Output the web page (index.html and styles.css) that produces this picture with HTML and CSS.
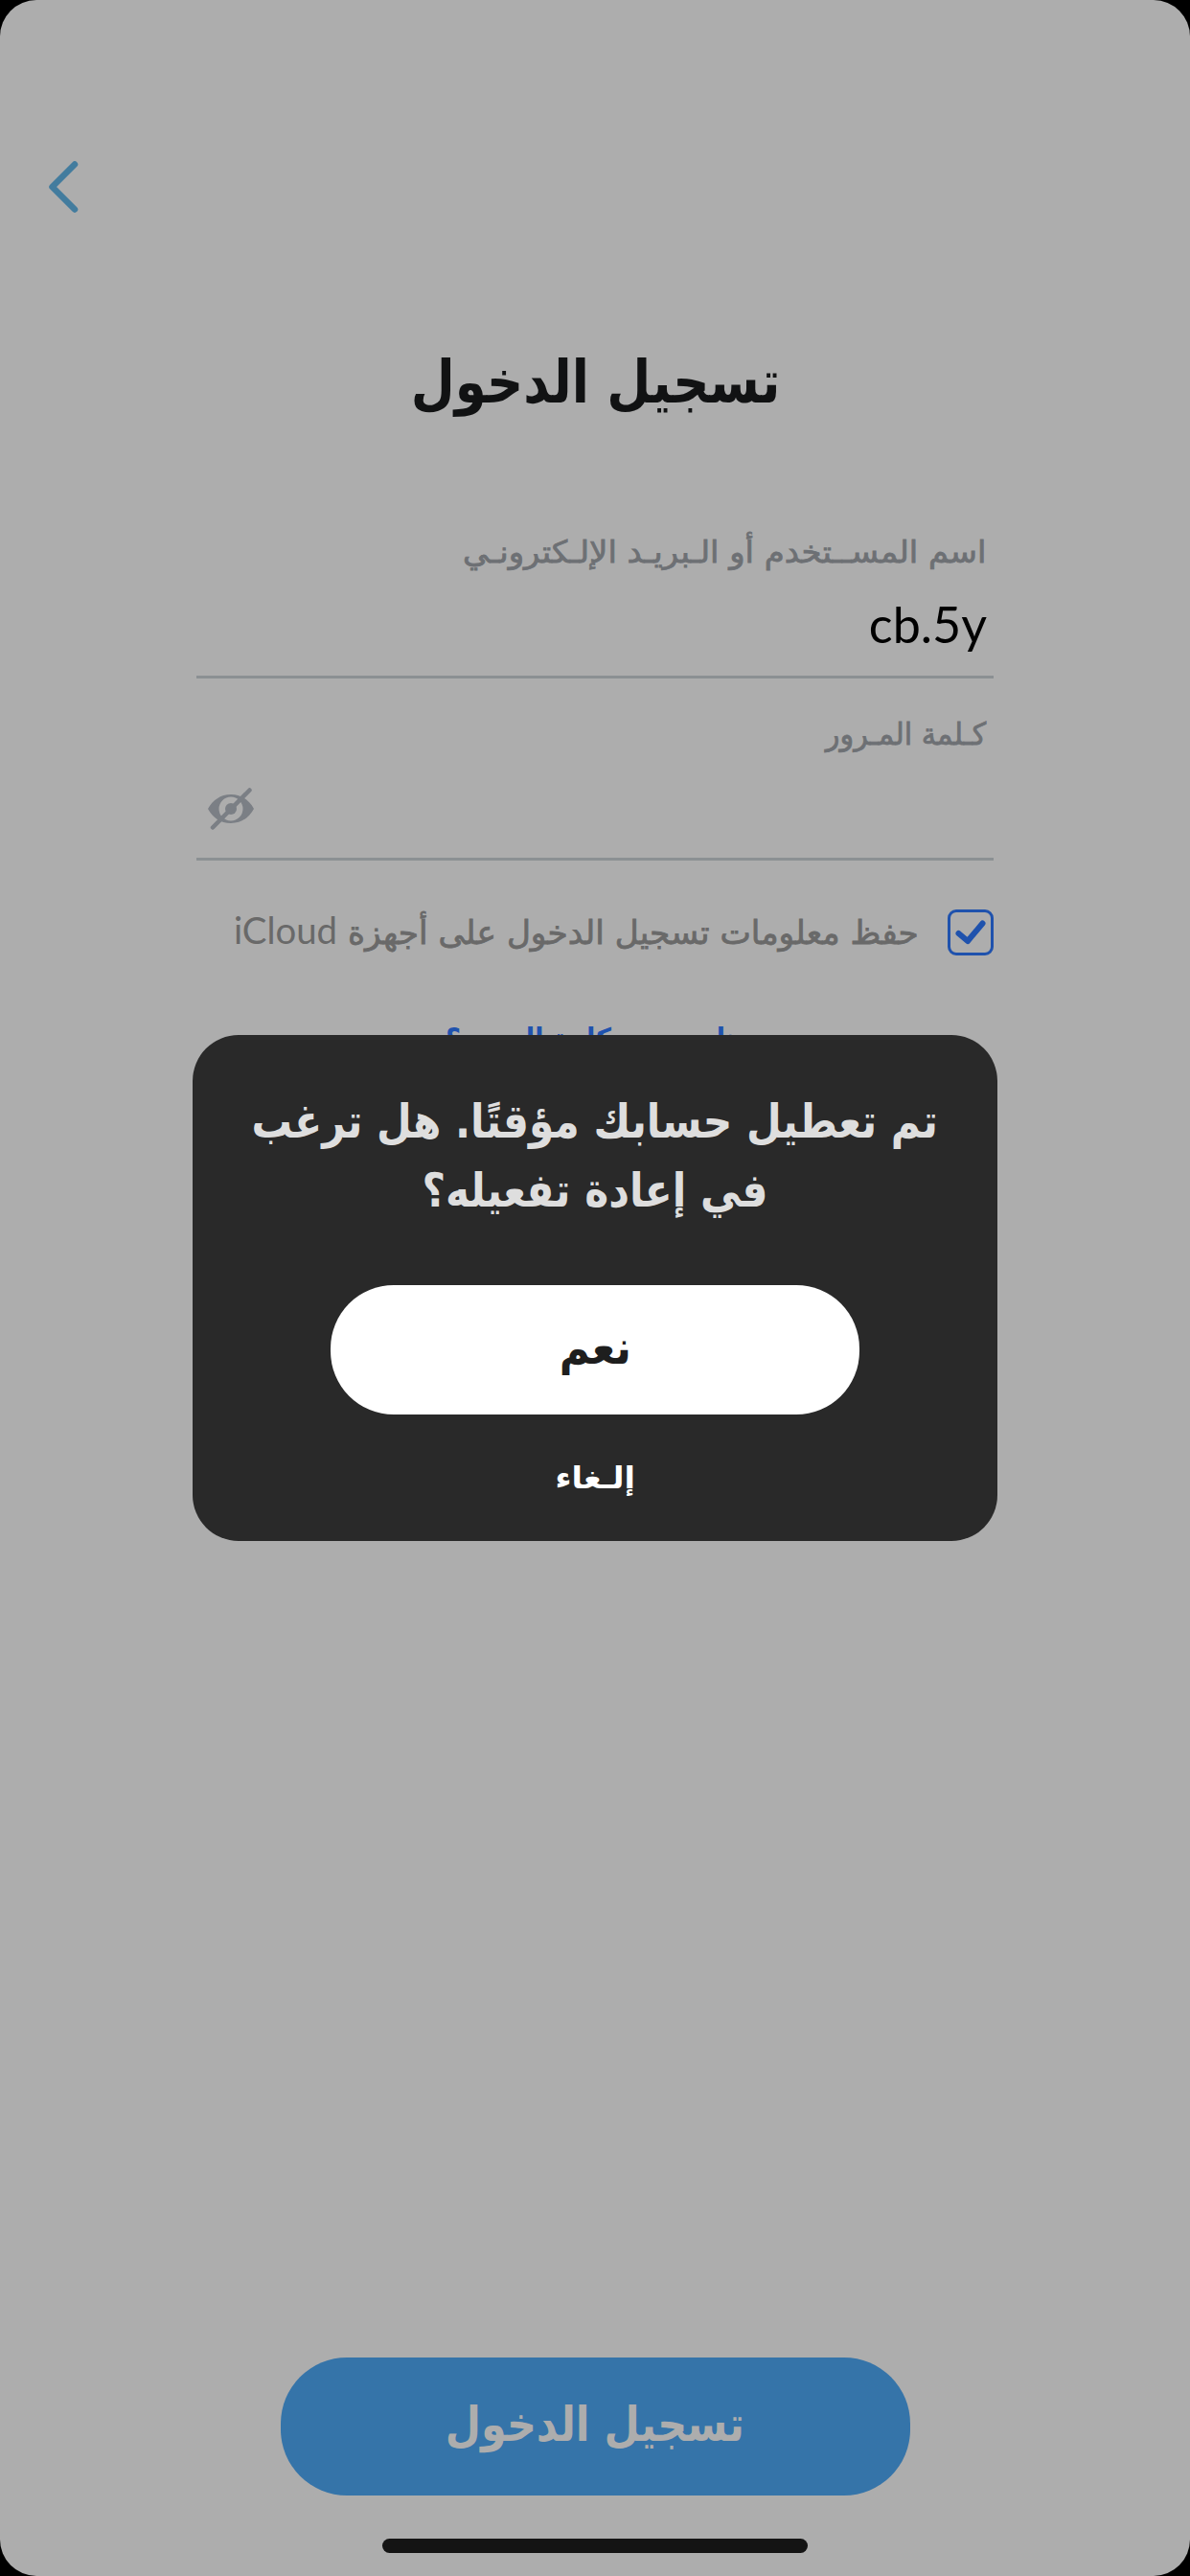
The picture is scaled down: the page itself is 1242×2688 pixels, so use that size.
FILE: index.html
```html
<!DOCTYPE html>
<html lang="ar" dir="rtl">
<head>
  <meta charset="UTF-8">
  <meta name="viewport" content="width=device-width, initial-scale=1.0">
  <title>تسجيل الدخول</title>
  <link rel="stylesheet" href="styles.css">
</head>
<body>
  <div class="screen">
    <!-- back -->
    <header class="nav">
      <svg class="back" viewBox="0 0 40 60" fill="none">
        <path d="M33 6.5 9.500 30l23.500 23.500"/>
      </svg>
    </header>

    <h1 class="title"><span>تسجيل الدخول</span></h1>

    <!-- login form -->
    <main class="form">
      <div class="field">
        <label class="label label-user"><span>اسم المســتخدم أو الـبريـد الإلـكترونـي</span></label>
        <div class="value">cb.5y</div>
      </div>
      <div class="field">
        <label class="label label-pass"><span>كـلمة المـرور</span></label>
        <div class="value">
          <svg class="eye" viewBox="0 0 48 44">
            <path fill-rule="evenodd" d="M0 22C5 13 13 7 24 7s19 6 24 15c-5 9-13 15-24 15S5 31 0 22zM24 9.500a12.500 12.500 0 1 0 0 25 12.500 12.500 0 0 0 0-25z"/>
            <circle cx="24" cy="22" r="6"/>
            <path class="slash" d="M5 41.500 43.500 2.500"/>
          </svg>
        </div>
      </div>
      <div class="remember">
        <svg class="checkbox" viewBox="0 0 48 48" fill="none">
          <rect x="1.5" y="1.500" width="45" height="45" rx="7.500"/>
          <path d="m11.500 25 9.500 8 15.500-18.500"/>
        </svg>
        <p class="remember-text"><span>حفظ معلومات تسجيل الدخول على أجهزة <bdi class="latin">iCloud</bdi></span></p>
      </div>
      <p class="forgot"><span>هل نسيت كلمة المرور؟</span></p>
    </main>

    <footer class="footer">
      <div class="login-btn"><span>تسجيل الدخول</span></div>
      <div class="home-bar"></div>
    </footer>

    <!-- reactivate account dialog -->
    <div class="dialog">
      <p class="message"><span>تم تعطيل حسابك مؤقتًا. هل ترغب</span><span>في إعادة تفعيله؟</span></p>
      <div class="yes-btn"><span>نعم</span></div>
      <div class="cancel"><span>إلـغاء</span></div>
    </div>
  </div>
</body>
</html>
```
FILE: styles.css
```css
html, body {
  margin: 0;
  padding: 0;
  background: #000;
}
* {
  box-sizing: border-box;
}
h1, p {
  margin: 0;
}
span {
  display: inline-block;
  white-space: nowrap;
}
.screen {
  position: relative;
  display: flex;
  flex-direction: column;
  width: 1242px;
  height: 2688px;
  border-radius: 38px;
  background: #adadad;
  overflow: hidden;
  font-family: "DejaVu Sans", sans-serif;
}
/* nav */
.nav {
  display: flex;
  justify-content: flex-end;
  height: 349px;
  padding: 165px 45px 0;
}
.back {
  width: 40px;
  height: 60px;
  stroke: #437c9e;
  stroke-width: 6.5;
  stroke-linecap: round;
  stroke-linejoin: round;
}
.title {
  height: 100px;
  line-height: 100px;
  text-align: center;
  font-size: 62px;
  color: #111213;
}
.title span {
  transform: scaleX(0.855);
}
/* form */
.form {
  width: 832px;
  margin: 82px auto 0;
}
.field {
  display: flex;
  flex-direction: column;
  height: 177px;
  border-bottom: 3px solid #8b9093;
}
.field + .field {
  height: 190px;
}
.label {
  height: 84px;
  padding: 20px 8px 0;
  line-height: 50px;
  font-size: 32px;
  color: #6d7074;
  -webkit-text-stroke: 0.8px #6d7074;
}
.label span {
  transform-origin: right;
}
.label-user span {
  transform: scaleX(1.06);
}
.label-pass span {
  transform: scaleX(0.95);
}
.field + .field .label {
  height: 97px;
  padding-top: 33px;
}
.value {
  display: flex;
  align-items: center;
  height: 76px;
  padding: 0 7px 4px 12px;
  font-family: Lato, sans-serif;
  font-size: 52px;
  color: #000;
}
.field + .field .value {
  height: 78px;
  padding-bottom: 0;
}
.eye {
  width: 48px;
  height: 44px;
  margin-right: auto;
  fill: #7b7f85;
}
.slash {
  stroke: #7b7f85;
  stroke-width: 4.500;
  stroke-linecap: round;
}
.remember {
  display: flex;
  align-items: center;
  gap: 30px;
  height: 150px;
}
.checkbox {
  flex: none;
  width: 48px;
  height: 48px;
  stroke: #1f52ad;
  stroke-width: 3;
}
.checkbox path {
  stroke-width: 6;
  stroke-linecap: round;
  stroke-linejoin: round;
}
.remember-text {
  padding-bottom: 3px;
  line-height: 50px;
  font-size: 34px;
  color: #696969;
  -webkit-text-stroke: 0.8px #696969;
}
.remember-text span {
  transform: scaleX(1.01);
  transform-origin: right;
}
.latin {
  font-family: Lato, sans-serif;
  font-size: 38px;
  -webkit-text-stroke: 0;
}
.forgot {
  padding-top: 6px;
  line-height: 60px;
  text-align: center;
  font-size: 31px;
  font-weight: bold;
  color: #1f52ad;
}
.forgot span {
  transform: scaleX(0.87);
}
/* footer */
.footer {
  display: flex;
  flex-direction: column;
  align-items: center;
  gap: 45px;
  margin-top: auto;
  padding-bottom: 24px;
}
.login-btn {
  width: 657px;
  height: 144px;
  border-radius: 69px;
  background: #3574a9;
  line-height: 140px;
  text-align: center;
  font-size: 50px;
  font-weight: bold;
  color: #adadad;
}
.login-btn span {
  transform: scaleX(0.858);
}
.home-bar {
  width: 444px;
  height: 15px;
  border-radius: 8px;
  background: #141414;
}
/* dialog */
.dialog {
  position: absolute;
  top: 1080px;
  left: 201px;
  display: flex;
  flex-direction: column;
  align-items: center;
  width: 840px;
  height: 528px;
  padding-top: 55px;
  border-radius: 48px;
  background: #292929;
  font-weight: bold;
}
.message {
  display: flex;
  flex-direction: column;
  align-items: center;
  height: 206px;
  line-height: 72px;
  font-size: 49px;
  color: #dedede;
}
.message span {
  transform: scaleX(0.864);
}
.yes-btn {
  width: 552px;
  height: 135px;
  border-radius: 66px;
  background: #fff;
  line-height: 132px;
  text-align: center;
  font-size: 49px;
  color: #1e1e1e;
}
.yes-btn span {
  transform: scaleX(0.89);
}
.cancel {
  margin-top: 36px;
  line-height: 60px;
  font-size: 32px;
  color: #fff;
}
.cancel span {
  transform: scaleX(1.04);
}
```
